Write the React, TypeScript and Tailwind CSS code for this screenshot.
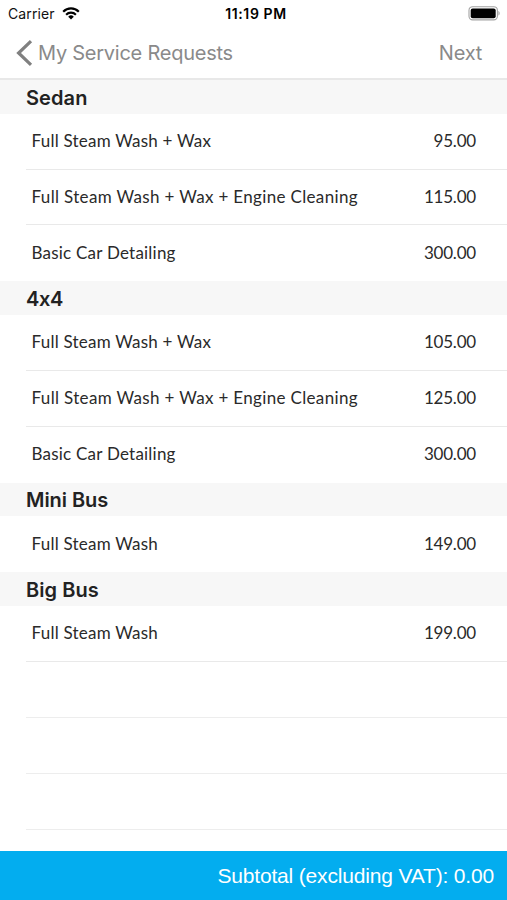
const sections = [
  {
    label: "Sedan",
    labelClass: "tracking-[0.1px]",
    services: [
      { name: "Full Steam Wash + Wax", price: "95.00" },
      { name: "Full Steam Wash + Wax + Engine Cleaning", price: "115.00" },
      { name: "Basic Car Detailing", price: "300.00" },
    ],
  },
  {
    label: "4x4",
    labelClass: "tracking-[-0.3px]",
    services: [
      { name: "Full Steam Wash + Wax", price: "105.00" },
      { name: "Full Steam Wash + Wax + Engine Cleaning", price: "125.00" },
      { name: "Basic Car Detailing", price: "300.00" },
    ],
  },
  {
    label: "Mini Bus",
    labelClass: "tracking-[-0.05px]",
    services: [{ name: "Full Steam Wash", price: "149.00" }],
  },
  {
    label: "Big Bus",
    labelClass: "tracking-[0.05px]",
    services: [{ name: "Full Steam Wash", price: "199.00" }],
  },
];

const emptyRows = [1, 2, 3];

const StatusBar = () => {
  return (
    <div className="grid h-[27px] shrink-0 grid-cols-3 items-center pl-[8px] pr-[7px] text-[14px] text-[#111111]">
      <div className="flex items-center gap-[7px]">
        <span className="tracking-[0.1px]">Carrier</span>
        <svg width="18" height="13" viewBox="0 0 18 13" fill="none">
          <path
            d="M1.2 4.7a11 11 0 0 1 15.6 0"
            stroke="#000"
            strokeWidth="2.2"
          />
          <path
            d="M4.1 7.7a6.9 6.9 0 0 1 9.8 0"
            stroke="#000"
            strokeWidth="2.1"
          />
          <path d="M9 12.5 6.2 9.7a4 4 0 0 1 5.6 0z" fill="#000" />
        </svg>
      </div>
      <div className="pl-[4px] text-center font-semibold tracking-[0.6px] whitespace-nowrap text-black">
        11:19 PM
      </div>
      <div className="flex justify-end">
        <svg width="32" height="15" viewBox="0 0 32 15">
          <rect
            x="1"
            y="0.7"
            width="28.4"
            height="13.2"
            rx="3.6"
            fill="#fff"
            stroke="#a3a3a3"
            strokeWidth="1.1"
          />
          <rect x="2.7" y="2.4" width="25" height="9.8" rx="2" fill="#000" />
          <path d="M30.4 5v4.6c1.7-.7 1.7-3.9 0-4.6z" fill="#a3a3a3" />
        </svg>
      </div>
    </div>
  );
};

const NavBar = () => {
  return (
    <div className="flex h-[53px] shrink-0 items-center justify-between border-b-2 border-[#e8e8e8] pr-[25px] pl-[16px] text-[20px] tracking-[-0.25px] text-[#8a8a8a]">
      <button type="button" className="flex items-center gap-[5px]">
        <svg width="17" height="26" viewBox="0 0 17 26" fill="none">
          <path d="M15 1.2 2.6 13 15 24.8" stroke="#808080" strokeWidth="3.2" />
        </svg>
        <span>My Service Requests</span>
      </button>
      <button type="button">Next</button>
    </div>
  );
};

export default function App() {
  return (
    <div className="flex h-[900px] w-[507px] flex-col overflow-hidden bg-white font-['Inter',sans-serif]">
      <StatusBar />
      <NavBar />
      {/* Service list */}
      <div className="flex-1 overflow-hidden">
        {sections.map((section, index) => (
          <div key={section.label}>
            <div className="flex h-[33.7px] items-center bg-[#f7f7f7] pt-[1.4px] pl-[26px] text-[20px] font-semibold text-[#222222]">
              <span className={section.labelClass}>{section.label}</span>
            </div>
            <div className="pl-[26px]">
              {section.services.map((service, i) => (
                <div
                  key={service.name}
                  className={
                    i < section.services.length - 1 ||
                    index === sections.length - 1
                      ? "flex h-[55.9px] items-center justify-between border-b border-[#e9e9e9] pr-[31px] pb-[1px] pl-[5.5px] font-['Lato',sans-serif] text-[17px] text-[#2a2a2a]"
                      : "flex h-[55.9px] items-center justify-between pr-[31px] pb-[2px] pl-[5.5px] font-['Lato',sans-serif] text-[17px] text-[#2a2a2a]"
                  }
                >
                  <span
                    className={
                      service.name.includes("Engine")
                        ? "tracking-[0.34px]"
                        : "tracking-[0.22px]"
                    }
                  >
                    {service.name}
                  </span>
                  <span className="tracking-[-0.2px]">{service.price}</span>
                </div>
              ))}
            </div>
          </div>
        ))}
        {/* Empty rows */}
        {emptyRows.map((row) => (
          <div
            key={row}
            className="ml-[26px] h-[55.9px] border-b border-[#ededed]"
          ></div>
        ))}
      </div>
      {/* Subtotal */}
      <div className="flex h-[49px] shrink-0 items-center justify-end bg-[#03adef] pt-[1px] pr-[13px] font-['Liberation_Sans',sans-serif] text-[21px] tracking-[-0.17px] text-white">
        Subtotal (excluding VAT): 0.00
      </div>
    </div>
  );
}
